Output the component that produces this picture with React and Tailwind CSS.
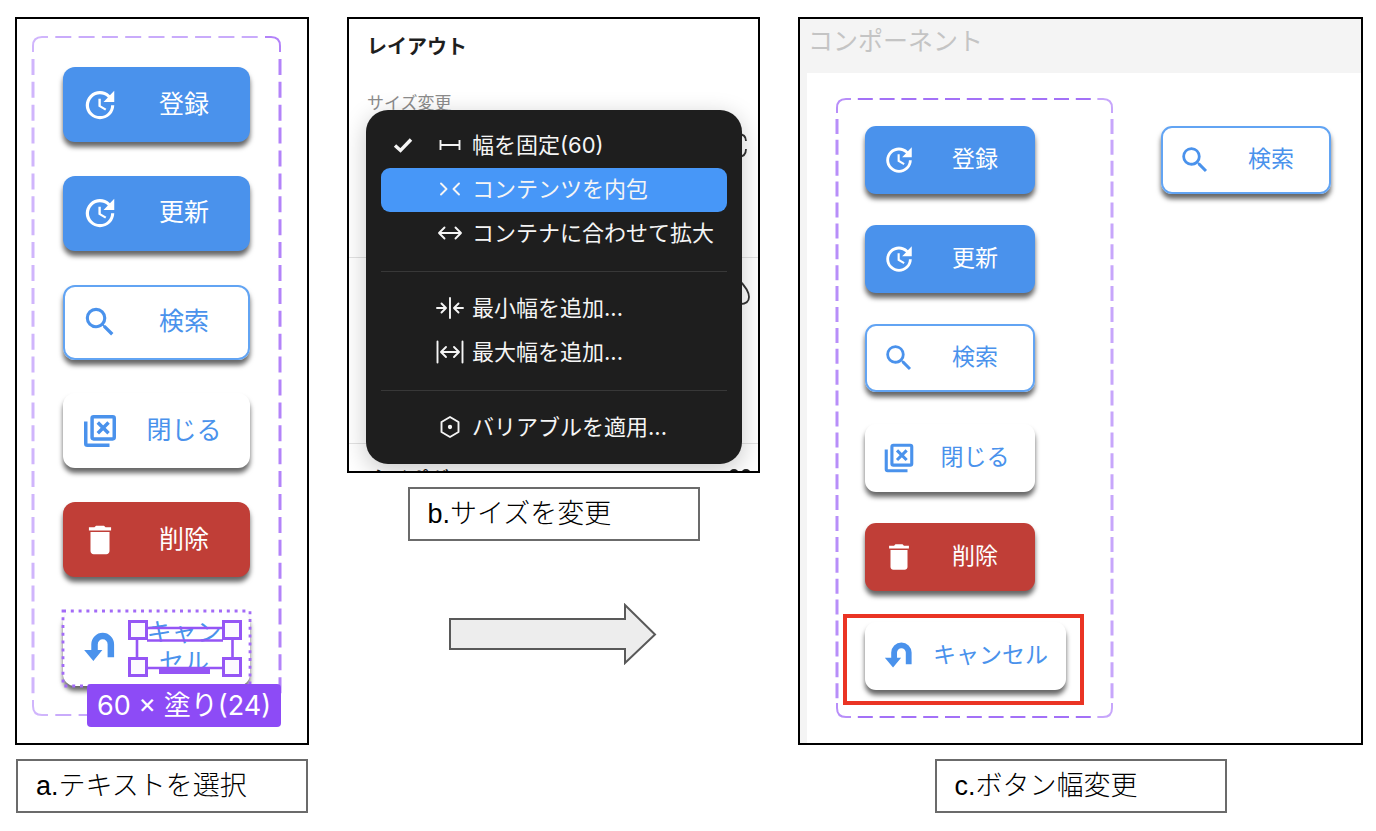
import React from 'react';
import { MdUpdate, MdSearch, MdDelete } from 'react-icons/md';

const CloseIcon = ({ className }) => (
    <svg viewBox="0 0 24 24" className={className} fill="none" stroke="currentColor" strokeWidth="2.2">
        <path d="M3 6v14a1 1 0 0 0 1 1h14" />
        <rect x="7" y="3" width="14" height="14" rx="1" />
        <path d="M10.6 6.6l6.8 6.8M17.4 6.6l-6.8 6.8" />
    </svg>
);

const ReturnIcon = ({ className }) => (
    <svg viewBox="0 0 24 24" className={className} fill="currentColor">
        <path d="M20.9 17.9h-4.1V9.6a3.1 3.1 0 0 0-6.2 0v3.6h2.9L7.8 20.2 2 13.2h4.5V9.6a7.2 7.2 0 0 1 14.4 0z" />
    </svg>
);

const BUTTONS = [
    { label: '登録', icon: MdUpdate, look: 'blue' },
    { label: '更新', icon: MdUpdate, look: 'blue' },
    { label: '検索', icon: MdSearch, look: 'outline' },
    { label: '閉じる', icon: CloseIcon, look: 'plain' },
    { label: '削除', icon: MdDelete, look: 'red' },
];

const LOOKS = {
    blue: 'bg-[#4a92ec] text-white',
    outline: 'bg-white text-[#4a92ec] outline-2 -outline-offset-2 outline-[#62a4f3]',
    plain: 'bg-white text-[#4a92ec]',
    red: 'bg-[#c03e37] text-white',
};

const SIZES = {
    lg: {
        button: 'h-[75px] px-[18px] rounded-xl gap-[17px] text-[25px] leading-[30px]',
        icon: 'size-[38px]',
        label: 'w-[96px]',
    },
    md: {
        button: 'h-[68px] px-[17px] rounded-[11px] gap-4 text-[23px] leading-7',
        icon: 'size-[34px]',
        label: 'min-w-[86px] px-px whitespace-nowrap',
    },
};

const ActionButton = ({ label, icon: Icon, look, size }) => (
    <button type="button" className={`flex items-center shadow-[0_5px_5px_rgba(0,0,0,0.6)] ${SIZES[size].button} ${LOOKS[look]}`}>
        <Icon className={`shrink-0 ${SIZES[size].icon}`} />
        <span className={`pb-[2px] text-center ${SIZES[size].label}`}>{label}</span>
    </button>
);

// Dashed outline of a component set: solid corners, evenly spread dashes on the sides
const DashedOutline = ({ w, h, corner, dashX, dashY, colors }) => {
    const r = 9;
    const c = corner;
    return (
        <svg className="absolute inset-0 size-full pointer-events-none" viewBox={`0 0 ${w} ${h}`} preserveAspectRatio="none" fill="none" aria-hidden="true">
            <g transform="translate(2 2)">
                <path d={`M${c} 0H${w - 4 - c}`} stroke={colors.top} strokeWidth="2" strokeDasharray={dashX} />
                <path d={`M${c} ${h - 4}H${w - 4 - c}`} stroke={colors.top} strokeWidth="2" strokeDasharray={dashX} />
                <path d={`M0 ${c}V${h - 4 - c}`} stroke={colors.left} strokeWidth="3" strokeDasharray={dashY} />
                <path d={`M${w - 4} ${c}V${h - 4 - c}`} stroke={colors.right} strokeWidth="3" strokeDasharray={dashY} />
                <path d={`M0 ${c}V${r}Q0 0 ${r} 0H${c}M0 ${h - 4 - c}v${c - r}q0 ${r} ${r} ${r}h${c - r}`} stroke={colors.left} strokeWidth="2" />
                <path d={`M${w - 4 - c} 0h${c - r}q${r} 0 ${r} ${r}v${c - r}M${w - 4 - c} ${h - 4}h${c - r}q${r} 0 ${r} ${-r}v${r - c}`} stroke={colors.right} strokeWidth="2" />
            </g>
        </svg>
    );
};

// Selection marks drawn over the label of the cancel button
const SelectionMarks = () => (
    <svg className="absolute -left-1 -top-1 w-[195px] h-[83px] pointer-events-none" viewBox="0 0 195 83" fill="none" aria-hidden="true">
        <rect x="4" y="4" width="187" height="75" stroke="#a36bf7" strokeWidth="2.8" strokeDasharray="3 4.8" />
        <g stroke="#9555f5" strokeWidth="2.6">
            <path d="M78 21H173M88 33.5H164M78 61H173" />
            <path d="M78 21V61M173.5 21V61" />
            <path d="M100 64.5H151" strokeWidth="5" />
            <g fill="#fcf9ff" strokeWidth="3">
                <rect x="70.5" y="14.5" width="17" height="17" />
                <rect x="164.5" y="14.5" width="17" height="17" />
                <rect x="70.5" y="51.5" width="17" height="17" />
                <rect x="164.5" y="51.5" width="17" height="17" />
            </g>
        </g>
    </svg>
);

const Caption = ({ children }) => (
    <figcaption className="mx-auto mt-[14px] w-[292px] max-w-full border-2 border-[#6b6b6b] bg-white pl-[18px] text-[27px] leading-[50px] text-black font-light font-['Liberation_Sans','Noto_Sans_CJK_JP',sans-serif]">
        {children}
    </figcaption>
);

const SelectPanel = () => (
    <div className="h-[728px] border-2 border-black bg-white pt-[16px] pl-[14px]">
        <div className="relative flex flex-col justify-between w-[251px] h-[682px] pt-[32px] pb-[31px] pl-[32px]">
            <DashedOutline
                w={251} h={682} corner={15}
                dashX="0 7.3 16 0" dashY="0 6.9 16 0"
                colors={{ top: '#c9abfb', left: '#d0b5fc', right: '#b383f9' }}
            />
            {BUTTONS.map((b) => (
                <div key={b.label} className="flex"><ActionButton {...b} size="lg" /></div>
            ))}
            <div className="relative flex">
                <ActionButton label="キャンセル" icon={ReturnIcon} look="plain" size="lg" />
                <SelectionMarks />
            </div>
            <div className="absolute right-px bottom-[-10px] h-[43px] px-[10px] rounded bg-[#8d4bf6] text-white text-[27px] leading-[43px] whitespace-nowrap">
                60 × 塗り(24)
            </div>
        </div>
    </div>
);

const MenuIcon = ({ children }) => (
    <svg viewBox="0 0 28 28" className="size-7 shrink-0" fill="none" stroke="currentColor" strokeWidth="1.9" strokeLinecap="round" strokeLinejoin="round" aria-hidden="true">
        {children}
    </svg>
);

const MENU = [
    [
        { label: '幅を固定(60)', checked: true, icon: <path d="M4.5 9v10M23.5 9v10M4.5 14h19" strokeLinecap="butt" /> },
        { label: 'コンテンツを内包', active: true, icon: <path d="M5 8.5l5.5 5.5L5 19.5M23 8.5L17.5 14l5.5 5.5" /> },
        { label: 'コンテナに合わせて拡大', icon: <path d="M3 14h22M8.5 8.5L3 14l5.5 5.5M19.5 8.5L25 14l-5.5 5.5" /> },
    ],
    [
        { label: '最小幅を追加...', icon: <path d="M14 4v20M1 14h8.5M5.5 9.5L10 14l-4.5 4.5M27 14h-8.5M22.5 9.5L18 14l4.5 4.5" /> },
        { label: '最大幅を追加...', icon: <path d="M1.5 3.5v21M26.5 3.5v21M5.5 14h17M10 9l-5 5 5 5M18 9l5 5-5 5" /> },
    ],
    [
        { label: 'バリアブルを適用...', icon: <><path d="M14 4l8.5 5v10L14 24l-8.5-5V9z" /><circle cx="14" cy="14" r="1.2" fill="currentColor" /></> },
    ],
];

const SizeMenu = () => (
    <div role="menu" className="absolute left-[17px] top-[91px] w-[376px] rounded-[22px] bg-[#1e1e1e] text-[#f5f5f5] px-[15px] py-[14px] shadow-[0_6px_24px_rgba(0,0,0,0.22)]">
        {MENU.map((group, i) => (
            <div key={i} className={i > 0 ? 'mt-[15px] border-t border-[#383838] pt-[15px]' : ''}>
                {group.map((item) => (
                    <button
                        key={item.label}
                        type="button"
                        role="menuitem"
                        className={`flex items-center w-full h-11 pl-3 pb-[2px] rounded-[9px] text-[22px] whitespace-nowrap ${item.active ? 'bg-[#4797f8]' : ''}`}
                    >
                        <span className="w-[43px] shrink-0">
                            {item.checked && (
                                <svg viewBox="0 0 20 20" className="size-5" fill="none" stroke="currentColor" strokeWidth="3.4" aria-hidden="true">
                                    <path d="M2 10.5l5.5 5L18 4.5" />
                                </svg>
                            )}
                        </span>
                        <MenuIcon>{item.icon}</MenuIcon>
                        <span className="ml-2">{item.label}</span>
                    </button>
                ))}
            </div>
        ))}
    </div>
);

const ResizePanel = () => (
    <div className="relative h-[456px] overflow-hidden border-2 border-black bg-white text-[#1e1e1e]">
        <section className="relative h-[239px] border-b border-[#e2e2e2] pl-[18px] pt-[13px]">
            <h2 className="text-[20px] leading-[30px] font-bold">レイアウト</h2>
            <p className="mt-[29px] text-[17px] leading-6 text-[#8c8c8c]">サイズ変更</p>
            <svg className="absolute right-[9px] top-[111px] w-[16px] h-[30px]" viewBox="0 0 16 30" fill="none" stroke="#333" strokeWidth="1.8" aria-hidden="true">
                <path d="M5 4q8 0 8 7M13 19q0 8-8 8" />
            </svg>
        </section>
        <section className="relative h-[186px] border-b border-[#e2e2e2]">
            <svg className="absolute right-[7px] top-[20px] w-[24px] h-[30px]" viewBox="0 0 24 30" fill="none" stroke="#333" strokeWidth="1.8" aria-hidden="true">
                <path d="M12 2q10 10 10 17 0 7-9 7" />
            </svg>
        </section>
        <section className="flex justify-between pl-[20px] pr-[6px] pt-[21px]">
            <h2 className="text-[20px] leading-[30px] font-bold">タイポグラフィ</h2>
            <svg className="mt-[3px] w-6 h-6" viewBox="0 0 24 24" fill="none" stroke="#1e1e1e" strokeWidth="2" aria-hidden="true">
                <circle cx="6" cy="6" r="4" />
                <circle cx="18" cy="6" r="4" />
            </svg>
        </section>
        <SizeMenu />
    </div>
);

const ResultPanel = () => (
    <div className="flex flex-col h-[728px] border-2 border-black bg-[#f4f4f4]">
        <h2 className="h-[54px] pl-[8px] text-[25px] leading-[44px] text-[#c4c4c4]">コンポーネント</h2>
        <div className="flex items-start flex-1 ml-[7px] pl-[28px] pt-[24px] bg-white">
            <div className="relative flex flex-col justify-between shrink-0 w-[279px] h-[622px] pt-[29px] pb-[29px] pl-[30px]">
                <DashedOutline
                    w={279} h={622} corner={14}
                    dashX="0 6.8 15 0" dashY="0 5.9 15 0"
                    colors={{ top: '#a371f7', left: '#b88ef9', right: '#c7a6fb' }}
                />
                {BUTTONS.map((b) => (
                    <div key={b.label} className="flex"><ActionButton {...b} size="md" /></div>
                ))}
                <div className="relative flex self-start">
                    <ActionButton label="キャンセル" icon={ReturnIcon} look="plain" size="md" />
                    <div className="absolute -left-[22px] -right-[18px] -top-[8px] -bottom-[15px] border-4 border-[#ea3424]" />
                </div>
            </div>
            <div className="flex ml-[47px] mt-[29px]">
                <ActionButton label="検索" icon={MdSearch} look="outline" size="md" />
            </div>
        </div>
    </div>
);

const App = () => (
    <main className="grid grid-cols-[294fr_413fr_565fr] items-start gap-x-[38px] bg-white pt-[17px] pb-[18px] pl-[15px] pr-[13px] font-['Inter','Noto_Sans_CJK_JP',sans-serif]">
        <figure>
            <SelectPanel />
            <Caption>a.テキストを選択</Caption>
        </figure>
        <div>
            <figure>
                <ResizePanel />
                <Caption>b.サイズを変更</Caption>
            </figure>
            <svg className="mx-auto mt-[62px] w-[210px] h-[62px]" viewBox="0 0 210 62" fill="#ededed" stroke="#595959" strokeWidth="2" aria-hidden="true">
                <path d="M1 16H176V2L206 31.5L176 60V46H1z" />
            </svg>
        </div>
        <figure>
            <ResultPanel />
            <Caption>c.ボタン幅変更</Caption>
        </figure>
    </main>
);

export default App;
